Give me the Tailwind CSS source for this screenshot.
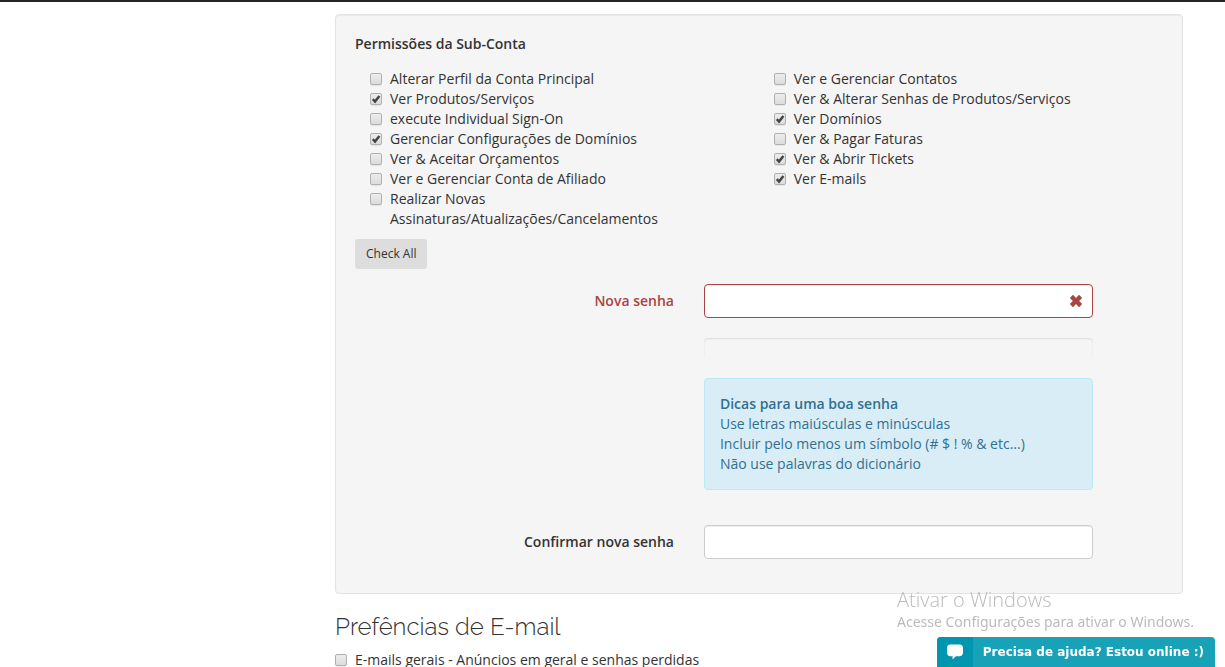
<!DOCTYPE html>
<html lang="pt-BR">
<head>
<meta charset="utf-8">
<meta name="viewport" content="width=device-width, initial-scale=1">
<title>Sub-Conta</title>
<script src="https://cdn.jsdelivr.net/npm/@tailwindcss/browser@4"></script>
</head>
<body class="bg-white font-['Open_Sans',sans-serif] text-sm leading-5 text-[#333]">
<svg class="hidden" aria-hidden="true">
  <symbol id="tick" viewBox="0 0 12 12"><path d="M2.800 6.200 5 8.500 9.400 3" fill="none" stroke="#444" stroke-width="2.500"/></symbol>
</svg>
<header class="h-[2px] bg-[#242424]"></header>
<div class="mx-auto flex max-w-[1170px] pt-3">
  <aside class="w-1/4"></aside>
  <main class="w-3/4 px-[15px]">
    <form>
      <section class="rounded border border-[#e3e3e3] bg-[#f5f5f5] p-[19px] shadow-[inset_0_1px_1px_rgba(0,0,0,0.05)]">
        <fieldset>
          <legend class="mb-[15px] font-semibold">Permissões da Sub-Conta</legend>
          <div class="flex">
            <div class="w-1/2 px-[15px]">
              <label class="flex items-start gap-2"><span class="mt-1 grid shrink-0"><input type="checkbox" class="col-start-1 row-start-1 size-3 appearance-none rounded-[2px] border border-[#b0b0b0] bg-linear-to-b from-[#ededed] to-[#dcdcdc] shadow-[0_1px_0_rgba(0,0,0,0.06)]"></span>Alterar Perfil da Conta Principal</label>
              <label class="flex items-start gap-2"><span class="mt-1 grid shrink-0"><input type="checkbox" checked class="peer col-start-1 row-start-1 size-3 appearance-none rounded-[2px] border border-[#b0b0b0] bg-linear-to-b from-[#ededed] to-[#dcdcdc] shadow-[0_1px_0_rgba(0,0,0,0.06)]"><svg class="pointer-events-none invisible col-start-1 row-start-1 size-3 peer-checked:visible"><use href="#tick"/></svg></span>Ver Produtos/Serviços</label>
              <label class="flex items-start gap-2"><span class="mt-1 grid shrink-0"><input type="checkbox" class="col-start-1 row-start-1 size-3 appearance-none rounded-[2px] border border-[#b0b0b0] bg-linear-to-b from-[#ededed] to-[#dcdcdc] shadow-[0_1px_0_rgba(0,0,0,0.06)]"></span>execute Individual Sign-On</label>
              <label class="flex items-start gap-2"><span class="mt-1 grid shrink-0"><input type="checkbox" checked class="peer col-start-1 row-start-1 size-3 appearance-none rounded-[2px] border border-[#b0b0b0] bg-linear-to-b from-[#ededed] to-[#dcdcdc] shadow-[0_1px_0_rgba(0,0,0,0.06)]"><svg class="pointer-events-none invisible col-start-1 row-start-1 size-3 peer-checked:visible"><use href="#tick"/></svg></span>Gerenciar Configurações de Domínios</label>
              <label class="flex items-start gap-2"><span class="mt-1 grid shrink-0"><input type="checkbox" class="col-start-1 row-start-1 size-3 appearance-none rounded-[2px] border border-[#b0b0b0] bg-linear-to-b from-[#ededed] to-[#dcdcdc] shadow-[0_1px_0_rgba(0,0,0,0.06)]"></span>Ver &amp; Aceitar Orçamentos</label>
              <label class="flex items-start gap-2"><span class="mt-1 grid shrink-0"><input type="checkbox" class="col-start-1 row-start-1 size-3 appearance-none rounded-[2px] border border-[#b0b0b0] bg-linear-to-b from-[#ededed] to-[#dcdcdc] shadow-[0_1px_0_rgba(0,0,0,0.06)]"></span>Ver e Gerenciar Conta de Afiliado</label>
              <label class="flex items-start gap-2"><span class="mt-1 grid shrink-0"><input type="checkbox" class="col-start-1 row-start-1 size-3 appearance-none rounded-[2px] border border-[#b0b0b0] bg-linear-to-b from-[#ededed] to-[#dcdcdc] shadow-[0_1px_0_rgba(0,0,0,0.06)]"></span>Realizar Novas Assinaturas/Atualizações/Cancelamentos</label>
            </div>
            <div class="w-1/2 px-[15px]">
              <label class="flex items-start gap-2"><span class="mt-1 grid shrink-0"><input type="checkbox" class="col-start-1 row-start-1 size-3 appearance-none rounded-[2px] border border-[#b0b0b0] bg-linear-to-b from-[#ededed] to-[#dcdcdc] shadow-[0_1px_0_rgba(0,0,0,0.06)]"></span>Ver e Gerenciar Contatos</label>
              <label class="flex items-start gap-2"><span class="mt-1 grid shrink-0"><input type="checkbox" class="col-start-1 row-start-1 size-3 appearance-none rounded-[2px] border border-[#b0b0b0] bg-linear-to-b from-[#ededed] to-[#dcdcdc] shadow-[0_1px_0_rgba(0,0,0,0.06)]"></span>Ver &amp; Alterar Senhas de Produtos/Serviços</label>
              <label class="flex items-start gap-2"><span class="mt-1 grid shrink-0"><input type="checkbox" checked class="peer col-start-1 row-start-1 size-3 appearance-none rounded-[2px] border border-[#b0b0b0] bg-linear-to-b from-[#ededed] to-[#dcdcdc] shadow-[0_1px_0_rgba(0,0,0,0.06)]"><svg class="pointer-events-none invisible col-start-1 row-start-1 size-3 peer-checked:visible"><use href="#tick"/></svg></span>Ver Domínios</label>
              <label class="flex items-start gap-2"><span class="mt-1 grid shrink-0"><input type="checkbox" class="col-start-1 row-start-1 size-3 appearance-none rounded-[2px] border border-[#b0b0b0] bg-linear-to-b from-[#ededed] to-[#dcdcdc] shadow-[0_1px_0_rgba(0,0,0,0.06)]"></span>Ver &amp; Pagar Faturas</label>
              <label class="flex items-start gap-2"><span class="mt-1 grid shrink-0"><input type="checkbox" checked class="peer col-start-1 row-start-1 size-3 appearance-none rounded-[2px] border border-[#b0b0b0] bg-linear-to-b from-[#ededed] to-[#dcdcdc] shadow-[0_1px_0_rgba(0,0,0,0.06)]"><svg class="pointer-events-none invisible col-start-1 row-start-1 size-3 peer-checked:visible"><use href="#tick"/></svg></span>Ver &amp; Abrir Tickets</label>
              <label class="flex items-start gap-2"><span class="mt-1 grid shrink-0"><input type="checkbox" checked class="peer col-start-1 row-start-1 size-3 appearance-none rounded-[2px] border border-[#b0b0b0] bg-linear-to-b from-[#ededed] to-[#dcdcdc] shadow-[0_1px_0_rgba(0,0,0,0.06)]"><svg class="pointer-events-none invisible col-start-1 row-start-1 size-3 peer-checked:visible"><use href="#tick"/></svg></span>Ver E-mails</label>
            </div>
          </div>
        </fieldset>
        <button type="button" class="mt-[10px] block h-[30px] rounded-[3px] bg-[#ddd] px-[11px] text-xs">Check All</button>

        <div class="-mx-[15px] mt-[15px] flex">
          <label for="new-password" class="w-5/12 px-[15px] pt-[7px] text-right font-semibold text-[#a94442]">Nova senha</label>
          <div class="w-1/2 px-[15px]">
            <div class="relative">
              <input id="new-password" type="password" class="block h-[34px] w-full rounded border border-[#a94442] bg-white px-3 shadow-[inset_0_1px_1px_rgba(0,0,0,0.075)] outline-none">
              <svg class="pointer-events-none absolute top-[11px] right-[11px] size-3" viewBox="0 0 12 12" fill="#a94442" aria-hidden="true"><path d="M.3 2.4 2.4.3a.7.7 0 0 1 1 0L6 2.900 8.600.3a.7.7 0 0 1 1 0L11.700 2.400a.7.7 0 0 1 0 1L9.100 6l2.600 2.600a.7.7 0 0 1 0 1L9.600 11.700a.7.7 0 0 1-1 0L6 9.100 3.400 11.700a.7.7 0 0 1-1 0L.3 9.600a.7.7 0 0 1 0-1L2.900 6 .3 3.400a.7.7 0 0 1 0-1z"/></svg>
            </div>
            <div role="progressbar" aria-label="Força da senha" aria-valuenow="0" class="my-5 h-5 rounded bg-[#f5f5f5] shadow-[inset_0_1px_2px_rgba(0,0,0,0.1)]"></div>
            <div class="rounded border border-[#bce8f1] bg-[#d9edf7] p-[15px] text-[#31708f]">
              <strong class="font-semibold">Dicas para uma boa senha</strong><br>
              Use letras maiúsculas e minúsculas<br>
              Incluir pelo menos um símbolo (# $ ! % &amp; etc...)<br>
              Não use palavras do dicionário
            </div>
          </div>
        </div>

        <div class="-mx-[15px] mt-[35px] mb-[15px] flex">
          <label for="confirm-password" class="w-5/12 px-[15px] pt-[7px] text-right font-semibold">Confirmar nova senha</label>
          <div class="w-1/2 px-[15px]">
            <input id="confirm-password" type="password" class="block h-[34px] w-full rounded border border-[#ccc] bg-white px-3 shadow-[inset_0_1px_1px_rgba(0,0,0,0.075)] outline-none">
          </div>
        </div>
      </section>

      <h3 class="mt-5 mb-[10px] font-['Raleway','Lato',sans-serif] text-2xl leading-[26px] font-light">Prefências de E-mail</h3>
      <label class="flex items-start gap-2"><span class="mt-1 grid shrink-0"><input type="checkbox" class="col-start-1 row-start-1 size-3 appearance-none rounded-[2px] border border-[#b0b0b0] bg-linear-to-b from-[#ededed] to-[#dcdcdc] shadow-[0_1px_0_rgba(0,0,0,0.06)]"></span>E-mails gerais - Anúncios em geral e senhas perdidas</label>
    </form>
  </main>
</div>

<div class="pointer-events-none fixed right-[31px] bottom-[35px] text-[#bbb]">
  <p class="font-['Segoe_UI','Open_Sans',sans-serif] text-xl leading-6 font-light">Ativar o Windows</p>
  <p class="font-['Segoe_UI','Noto_Sans',sans-serif] text-sm leading-5">Acesse Configurações para ativar o Windows.</p>
</div>

<button type="button" class="fixed right-[10px] bottom-0 flex h-[30px] items-stretch overflow-hidden rounded-t bg-[#17a2b8] font-['Verdana','DejaVu_Sans',sans-serif] text-xs font-bold text-white">
  <span class="flex w-9 items-center justify-center bg-[#0097ae]">
    <svg class="size-4" viewBox="0 0 16 16" fill="#fff" aria-hidden="true"><path d="M3.500.5h9C14.800.5 16 2 16 4v4.500c0 2.300-1.300 3.700-3.500 3.700H8.800L5.600 15.600v-3.400H3.500C1.200 12.200 0 10.800 0 8.500V4C0 2 1.200.5 3.500.5z"/></svg>
  </span>
  <span class="flex items-center pr-[11px] pl-[10px]">Precisa de ajuda? Estou online :)</span>
</button>
</body>
</html>
